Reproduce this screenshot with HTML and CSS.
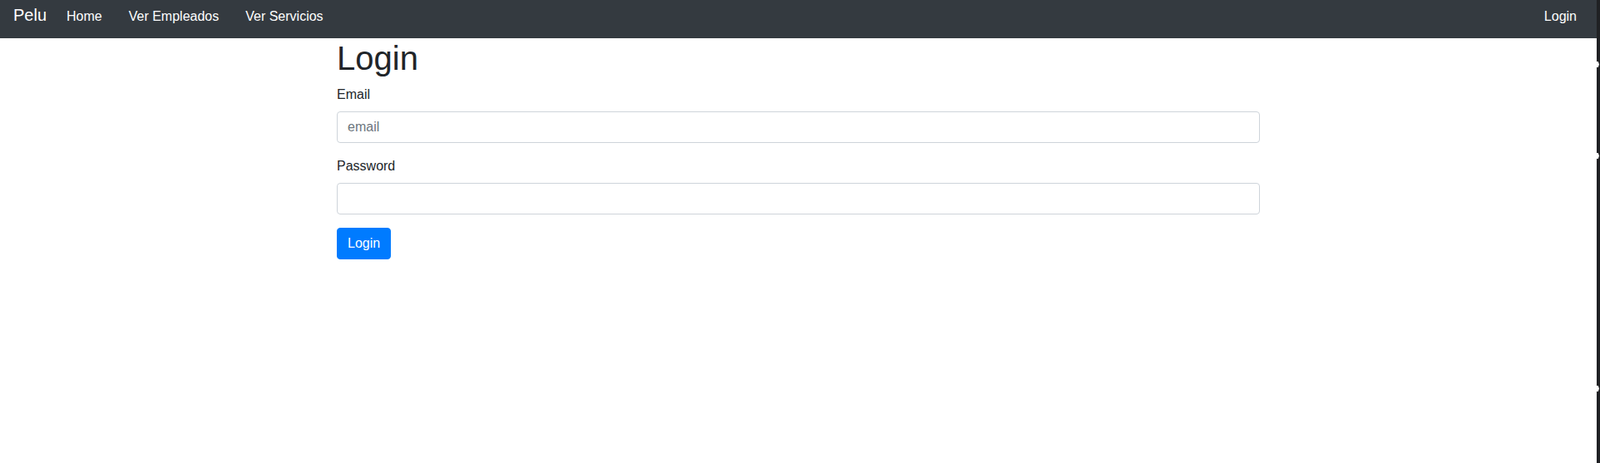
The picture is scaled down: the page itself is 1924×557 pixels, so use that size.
FILE: index.html
```html
<!DOCTYPE html>
<html lang="es">
<head>
<meta charset="utf-8">
<title>Pelu - Login</title>
<link rel="stylesheet" href="styles.css">
</head>
<body>
<div class="shell">
  <div class="page">
    <nav class="navbar">
      <a class="brand" href="#">Pelu</a>
      <ul class="nav">
        <li><a class="nav-link" href="#">Home</a></li>
        <li><a class="nav-link" href="#">Ver Empleados</a></li>
        <li><a class="nav-link" href="#">Ver Servicios</a></li>
      </ul>
      <ul class="nav nav-right">
        <li><a class="nav-link" href="#">Login</a></li>
      </ul>
    </nav>
    <main class="container">
      <h1 class="title">Login</h1>
      <form class="form">
        <div class="form-group">
          <label class="label" for="email">Email</label>
          <input class="input" id="email" type="email" placeholder="email">
        </div>
        <div class="form-group">
          <label class="label" for="password">Password</label>
          <input class="input" id="password" type="password">
        </div>
        <button class="btn" type="button">Login</button>
      </form>
    </main>
  </div>
  <div class="strip">
    <div class="notch notch-1"></div>
    <div class="notch notch-2"></div>
    <div class="notch notch-3"></div>
  </div>
</div>
</body>
</html>
```

FILE: styles.css
```css
* { box-sizing: border-box; }

html, body {
  margin: 0;
  padding: 0;
  background: #fff;
}

body {
  font-family: "Liberation Sans", Arial, sans-serif;
  font-size: 16px;
  line-height: 1.5;
  color: #212529;
}

.shell {
  display: grid;
  grid-template-columns: minmax(0, 1fr) 4px;
  min-height: 100vh;
}

.page {
  min-width: 0;
}

.navbar {
  display: flex;
  align-items: baseline;
  height: 46px;
  padding: 3px 16px 0;
  background: #343a40;
}

.brand {
  font-size: 20px;
  line-height: 30px;
  color: #fff;
  text-decoration: none;
  margin-right: 8px;
}

.nav {
  display: flex;
  list-style: none;
  margin: 0;
  padding: 0;
}

.nav-right {
  margin-left: auto;
}

.nav-right .nav-link {
  padding: 0 8px;
}

.nav-link {
  display: block;
  padding: 0 16px;
  line-height: 24px;
  color: #fff;
  text-decoration: none;
}

.container {
  width: 1140px;
  margin: 0 auto;
  padding: 0 15px;
}

.title {
  margin: 0 0 8px;
  font-size: 40px;
  font-weight: 400;
  line-height: 1.2;
}

.form-group {
  margin-bottom: 16px;
}

.label {
  display: block;
  margin-bottom: 8px;
}

.input {
  display: block;
  width: 100%;
  height: 38px;
  padding: 6px 12px;
  font-family: inherit;
  font-size: 16px;
  line-height: 1.5;
  color: #495057;
  background: #fff;
  border: 1px solid #ced4da;
  border-radius: 4px;
  outline: none;
}

.input::placeholder {
  color: #6c757d;
  opacity: 1;
}

.btn {
  display: inline-block;
  height: 38px;
  padding: 6px 12px;
  font-family: inherit;
  font-size: 16px;
  line-height: 1.5;
  color: #fff;
  background: #007bff;
  border: 1px solid #007bff;
  border-radius: 4px;
  cursor: pointer;
}

.strip {
  background: #202124;
  display: flex;
  flex-direction: column;
}

.notch {
  width: 3px;
  height: 7px;
  background: #fff;
  clip-path: polygon(0 0, 60% 0, 100% 50%, 60% 100%, 0 100%);
}

.notch-1 { margin-top: 74px; }
.notch-2 { margin-top: 103px; }
.notch-3 { margin-top: 273px; }
```
